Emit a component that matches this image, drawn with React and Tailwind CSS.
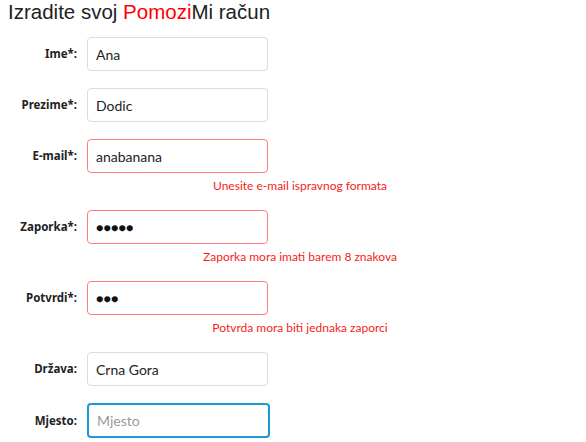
const fields = [
  { label: "Ime*:", value: "Ana" },
  { label: "Prezime*:", value: "Dodic" },
  {
    label: "E-mail*:",
    value: "anabanana",
    error: "Unesite e-mail ispravnog formata",
  },
  {
    label: "Zaporka*:",
    value: "●●●●●",
    dots: true,
    error: "Zaporka mora imati barem 8 znakova",
  },
  {
    label: "Potvrdi*:",
    value: "●●●",
    dots: true,
    error: "Potvrda mora biti jednaka zaporci",
  },
  { label: "Država:", value: "Crna Gora" },
  { label: "Mjesto:", value: "", placeholder: "Mjesto", focused: true },
];

function FormRow({ field }) {
  let border = "border border-[#dcdcdc]";
  if (field.error) border = "border border-[#ff7b7b]";
  if (field.focused) border = "border-2 border-[#1a9ad6] px-[7px] w-[183px] h-[35px]";
  const text = field.dots
    ? "text-[12.5px] text-[#111]"
    : "text-[14px] text-[#222]";

  return (
    <div className="mb-[17px]">
      <div className="flex items-center">
        <label
          className="w-[77px] text-right text-[11.5px] font-bold text-[#222]"
          style={{ fontFamily: '"Noto Sans", sans-serif' }}
        >
          {field.label}
        </label>
        <input
          type="text"
          defaultValue={field.value}
          placeholder={field.placeholder}
          className={`ml-[10px] h-[34px] w-[181px] rounded-[4px] bg-white px-[8px] outline-none placeholder:text-[#999] ${text} ${border}`}
        />
      </div>
      {field.error && (
        <div className="mt-[5px] h-[15px] w-[600px] text-center text-[12px] leading-[15px] text-[#f51c1c]">
          {field.error}
        </div>
      )}
    </div>
  );
}

export default function App() {
  return (
    <div
      className="h-[442px] w-[586px] overflow-hidden bg-white"
      style={{ fontFamily: 'Lato, "Noto Sans", sans-serif' }}
    >
      <h1
        className="pl-[8px] text-[20.5px] leading-[24px] text-[#222]"
        style={{ fontFamily: '"Liberation Sans", Arial, sans-serif' }}
      >
        Izradite svoj <span className="text-[#ff0000]">Pomozi</span>Mi račun
      </h1>
      <div className="mt-[13px]">
        {fields.map((field) => (
          <FormRow key={field.label} field={field} />
        ))}
      </div>
    </div>
  );
}
